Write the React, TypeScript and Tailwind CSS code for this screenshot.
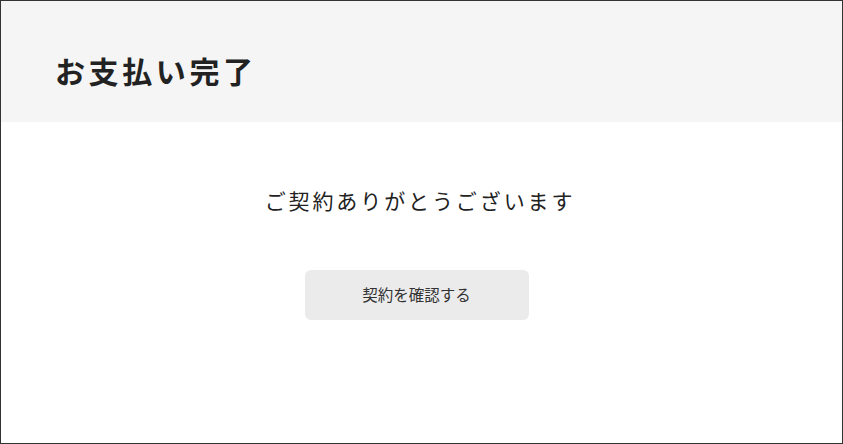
export default function App() {
  return (
    <div
      className="w-full h-[444px] border border-[#333] bg-white flex flex-col text-[#222]"
      style={{ fontFamily: '"Noto Sans CJK JP", "Noto Sans", sans-serif' }}
    >
      {/* header */}
      <div className="h-[121px] bg-[#f5f5f5] flex items-center pl-[54px] pt-[16px]">
        <h1 className="text-[30px] font-bold tracking-[3.6px] leading-none">お支払い完了</h1>
      </div>

      <div className="flex flex-col items-center pt-[68px] pr-[10px]">
        <p className="text-[21px] tracking-[2.9px] leading-none pl-[7px]">ご契約ありがとうございます</p>
        <button className="mt-[59px] w-[224px] h-[50px] rounded-[6px] bg-[#ebebeb] text-[15.5px] text-[#333]">
          契約を確認する
        </button>
      </div>
    </div>
  );
}
